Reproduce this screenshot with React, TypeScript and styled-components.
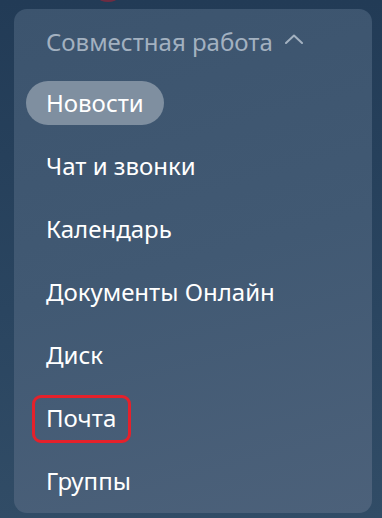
import { FC } from "react";
import styled, { createGlobalStyle } from "styled-components";

const GlobalStyle = createGlobalStyle`
    html, body {
        margin: 0;
        padding: 0;
        background: #243d58;
    }
    body {
        font-family: "Noto Sans", "Open Sans", sans-serif;
    }
`;

const items = [
    "Новости",
    "Чат и звонки",
    "Календарь",
    "Документы Онлайн",
    "Диск",
    "Почта",
    "Группы",
];

const ChevronUp: FC = () => (
    <svg width="18" height="10" viewBox="0 0 18 10" fill="none">
        <polyline points="1,9 9,1.5 17,9" stroke="#a3b1c0" strokeWidth="2" strokeLinecap="round" strokeLinejoin="round" />
    </svg>
);

const App: FC = () => {
    return (
        <>
            <GlobalStyle />
            <Screen>
                <AvatarEdge />
                <Panel>
                    <Header>
                        <span>Совместная работа</span>
                        <ChevronUp />
                    </Header>
                    <List>
                        {items.map((item, i) => (
                            <Row key={item}>
                                <Label active={i === 0} marked={item === "Почта"}>
                                    {item}
                                </Label>
                            </Row>
                        ))}
                    </List>
                </Panel>
            </Screen>
        </>
    );
};

export default App;

const Screen = styled.div`
    position: relative;
    width: 382px;
    height: 518px;
    box-sizing: border-box;
    padding: 9px 10px 5px 14px;
    background: linear-gradient(180deg, #223b56 0%, #2a4560 60%, #314c66 100%);
    overflow: hidden;
`;

const AvatarEdge = styled.div`
    position: absolute;
    left: 90px;
    top: -34px;
    width: 36px;
    height: 36px;
    border-radius: 50%;
    background: #6e2c42;
`;

const Panel = styled.div`
    width: 358px;
    height: 504px;
    box-sizing: border-box;
    padding-top: 12px;
    border-radius: 13px;
    background: linear-gradient(165deg, #3c546e 0%, #415973 50%, #4c617a 100%);
    display: flex;
    flex-direction: column;
`;

const Header = styled.div`
    height: 40px;
    margin-bottom: 10px;
    padding-left: 32px;
    display: flex;
    align-items: center;
    gap: 12px;
    font-size: 24px;
    color: #a3b1c0;

    svg {
        margin-top: -4px;
    }
`;

const List = styled.div`
    display: flex;
    flex-direction: column;
`;

const Row = styled.div`
    height: 63px;
    display: flex;
    align-items: center;
    padding-left: 12px;
`;

const Label = styled.div<{ active: boolean; marked: boolean }>`
    position: relative;
    height: 44px;
    padding: 0 20px;
    display: inline-flex;
    align-items: center;
    border-radius: 22px;
    font-size: 24px;
    color: #ffffff;
    background: ${(props) => (props.active ? "#7f8fa0" : "transparent")};

    &::after {
        content: "";
        display: ${(props) => (props.marked ? "block" : "none")};
        position: absolute;
        left: 6px;
        right: 5px;
        top: -1px;
        bottom: -3px;
        border: 3px solid #e5212b;
        border-radius: 9px;
    }
`;
